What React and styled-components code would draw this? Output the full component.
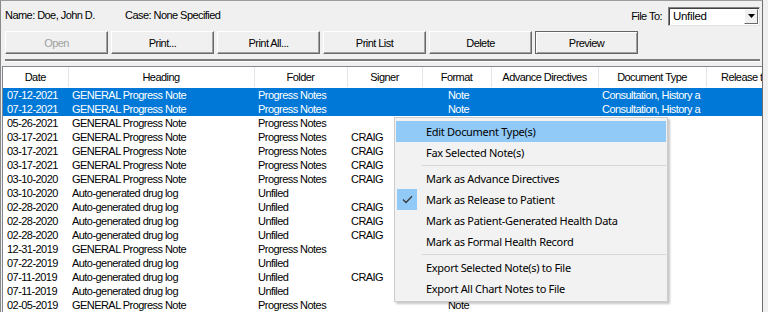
import styled, { createGlobalStyle } from "styled-components";

const GlobalStyle = createGlobalStyle`
  html, body {
    margin: 0;
    padding: 0;
    background: #f0f0f0;
    overflow: hidden;
  }
  body {
    font-family: "Liberation Sans", Arial, sans-serif;
    font-size: 11px;
    letter-spacing: -0.55px;
    color: #000;
  }
`;

const columns = [
  { key: "date", label: "Date", width: 65 },
  { key: "heading", label: "Heading", width: 186 },
  { key: "folder", label: "Folder", width: 93 },
  { key: "signer", label: "Signer", width: 75 },
  { key: "format", label: "Format", width: 69, center: true },
  { key: "adv", label: "Advance Directives", width: 107 },
  { key: "doctype", label: "Document Type", width: 108 },
  { key: "release", label: "Release to Patient", width: 110 },
];

const tableWidth = columns.reduce((sum, c) => sum + c.width, 0);

const GEN = "GENERAL Progress Note";
const DRUG = "Auto-generated drug log";

// format column is hidden under the menu for most rows
const rows = [
  ["07-12-2021", GEN, "Progress Notes", "", "Note", "", "Consultation, History a", true],
  ["07-12-2021", GEN, "Progress Notes", "", "Note", "", "Consultation, History a", true],
  ["05-26-2021", GEN, "Progress Notes", "", "", "", ""],
  ["03-17-2021", GEN, "Progress Notes", "CRAIG", "", "", ""],
  ["03-17-2021", GEN, "Progress Notes", "CRAIG", "", "", ""],
  ["03-17-2021", GEN, "Progress Notes", "CRAIG", "", "", ""],
  ["03-10-2020", GEN, "Progress Notes", "CRAIG", "", "", ""],
  ["03-10-2020", DRUG, "Unfiled", "", "", "", ""],
  ["02-28-2020", DRUG, "Unfiled", "CRAIG", "", "", ""],
  ["02-28-2020", DRUG, "Unfiled", "CRAIG", "", "", ""],
  ["02-28-2020", DRUG, "Unfiled", "CRAIG", "", "", ""],
  ["12-31-2019", GEN, "Progress Notes", "", "", "", ""],
  ["07-22-2019", DRUG, "Unfiled", "", "", "", ""],
  ["07-11-2019", DRUG, "Unfiled", "CRAIG", "", "", ""],
  ["07-11-2019", DRUG, "Unfiled", "", "", "", ""],
  ["02-05-2019", GEN, "Progress Notes", "", "Note", "", ""],
];

const menuGroups = [
  [{ label: "Edit Document Type(s)", hot: true }, { label: "Fax Selected Note(s)" }],
  [
    { label: "Mark as Advance Directives" },
    { label: "Mark as Release to Patient", checked: true },
    { label: "Mark as Patient-Generated Health Data" },
    { label: "Mark as Formal Health Record" },
  ],
  [{ label: "Export Selected Note(s) to File" }, { label: "Export All Chart Notes to File" }],
];

export default function App() {
  return (
    <>
      <GlobalStyle />
      <Frame>
        <TopBar>
          <PatientName>Name: Doe, John D.</PatientName>
          <CaseLabel>Case: None Specified</CaseLabel>
          <FileTo>
            <span>File To:</span>
            <Select>
              <span>Unfiled</span>
              <DropButton>
                <svg width="7" height="4" viewBox="0 0 7 4">
                  <path d="M0 0h7L3.5 4z" fill="#000" />
                </svg>
              </DropButton>
            </Select>
          </FileTo>
        </TopBar>

        <ButtonRow>
          <Button disabled>Open</Button>
          <Button>Print...</Button>
          <Button>Print All...</Button>
          <Button>Print List</Button>
          <Button>Delete</Button>
          <Button $default>Preview</Button>
        </ButtonRow>

        <Groove />

        <ListBox>
          <Table style={{ width: tableWidth }}>
            <colgroup>
              {columns.map((c) => (
                <col key={c.key} style={{ width: c.width }} />
              ))}
            </colgroup>
            <thead>
              <tr>
                {columns.map((c) => (
                  <HeadCell key={c.key}>{c.label}</HeadCell>
                ))}
              </tr>
            </thead>
            <tbody>
              {rows.map((r, i) => (
                <Row key={i} $selected={r[7]}>
                  {columns.map((c, j) => (
                    <Cell key={c.key} $center={c.center}>
                      {r[j] || ""}
                    </Cell>
                  ))}
                </Row>
              ))}
            </tbody>
          </Table>

          <Menu>
            {menuGroups.map((group, gi) => (
              <div key={gi}>
                {gi > 0 && <MenuSeparator />}
                {group.map((item) => (
                  <MenuItem key={item.label} $hot={item.hot}>
                    {item.checked && (
                      <CheckBox>
                        <svg width="11" height="9" viewBox="0 0 11 9">
                          <path d="M1 4.5l3 3L10 1.2" fill="none" stroke="#3a3a3a" strokeWidth="1.3" />
                        </svg>
                      </CheckBox>
                    )}
                    {item.label}
                  </MenuItem>
                ))}
              </div>
            ))}
          </Menu>
        </ListBox>
      </Frame>
    </>
  );
}

const Frame = styled.div`
  width: 763px;
  height: 312px;
  box-sizing: border-box;
  border-top: 1px solid #9c9c9c;
  border-left: 1px solid #8a8a8a;
  border-right: 1px solid #6f6f6f;
  display: flex;
  flex-direction: column;
`;

const TopBar = styled.div`
  height: 28px;
  display: flex;
  align-items: center;
  padding: 0 2px 0 4px;
`;

const PatientName = styled.span`
  width: 120px;
`;

const CaseLabel = styled.span`
  flex: 1;
`;

const FileTo = styled.div`
  display: flex;
  align-items: center;
  gap: 6px;
  padding-top: 2px;
`;

const Select = styled.div`
  width: 92px;
  height: 19px;
  box-sizing: border-box;
  background: #fff;
  border: 1px solid;
  border-color: #828282 #e3e3e3 #e3e3e3 #828282;
  box-shadow: inset 1px 1px 0 #404040;
  display: flex;
  align-items: center;
  justify-content: space-between;
  padding-left: 4px;
  font-size: 11.5px;
  letter-spacing: -0.3px;
`;

const DropButton = styled.div`
  width: 14px;
  height: 15px;
  margin-right: 1px;
  background: #f0f0f0;
  box-sizing: border-box;
  border: 1px solid;
  border-color: #fff #696969 #696969 #fff;
  display: flex;
  align-items: center;
  justify-content: center;
`;

const ButtonRow = styled.div`
  display: flex;
  gap: 3px;
  padding: 2px 0 0 4px;
`;

const Button = styled.button`
  width: 103px;
  height: 23px;
  box-sizing: border-box;
  margin: 0;
  padding: 0;
  font: inherit;
  letter-spacing: inherit;
  color: #000;
  background: #f0f0f0;
  border: 1px solid;
  border-color: #fff #6a6a6a #6a6a6a #fff;
  box-shadow: inset -1px -1px 0 #a0a0a0;

  &:disabled {
    color: #a0a0a0;
  }

  ${(p) =>
    p.$default &&
    `
    border-color: #646464;
    box-shadow: inset 1px 1px 0 #fff, inset -1px -1px 0 #a0a0a0;
  `}
`;

const Groove = styled.div`
  margin: 5px 2px 0 4px;
  height: 0;
  border-top: 2px solid #7c7c7c;
  border-bottom: 1px solid #fff;
`;

const ListBox = styled.div`
  position: relative;
  flex: 1;
  margin: 4px 0 0 1px;
  background: #fff;
  border-top: 1px solid #828790;
  border-left: 1px solid #828790;
  overflow: hidden;
`;

const Table = styled.table`
  table-layout: fixed;
  border-collapse: collapse;
`;

const HeadCell = styled.th`
  height: 20px;
  padding: 0;
  font-weight: normal;
  text-align: center;
  white-space: nowrap;
  overflow: hidden;
  border-right: 1px solid #e5e5e5;
  border-bottom: 1px solid #fff;
`;

const Row = styled.tr`
  height: 14px;
  background: ${(p) => (p.$selected ? "#0078d7" : "#fff")};
  color: ${(p) => (p.$selected ? "#fff" : "#000")};
`;

const Cell = styled.td`
  padding: 0 0 0 4px;
  height: 14px;
  line-height: 14px;
  white-space: nowrap;
  overflow: hidden;
  text-align: ${(p) => (p.$center ? "center" : "left")};
`;

const Menu = styled.div`
  position: absolute;
  left: 391px;
  top: 50px;
  width: 274px;
  box-sizing: border-box;
  padding: 3px 1px 2px;
  background: #f2f2f2;
  border: 1px solid #cccccc;
  box-shadow: 2px 2px 2px rgba(0, 0, 0, 0.22);
  font-family: "Noto Sans", "Open Sans", sans-serif;
  font-size: 11px;
  letter-spacing: -0.3px;
`;

const MenuItem = styled.div`
  position: relative;
  height: 21px;
  line-height: 21px;
  padding-left: 30px;
  background: ${(p) => (p.$hot ? "#91c9f7" : "transparent")};
  white-space: nowrap;
`;

const CheckBox = styled.span`
  position: absolute;
  left: 1px;
  top: 0;
  width: 20px;
  height: 21px;
  background: #91c9f7;
  display: flex;
  align-items: center;
  justify-content: center;
`;

const MenuSeparator = styled.div`
  height: 1px;
  margin: 2px 0 2px 26px;
  background: #d7d7d7;
`;
